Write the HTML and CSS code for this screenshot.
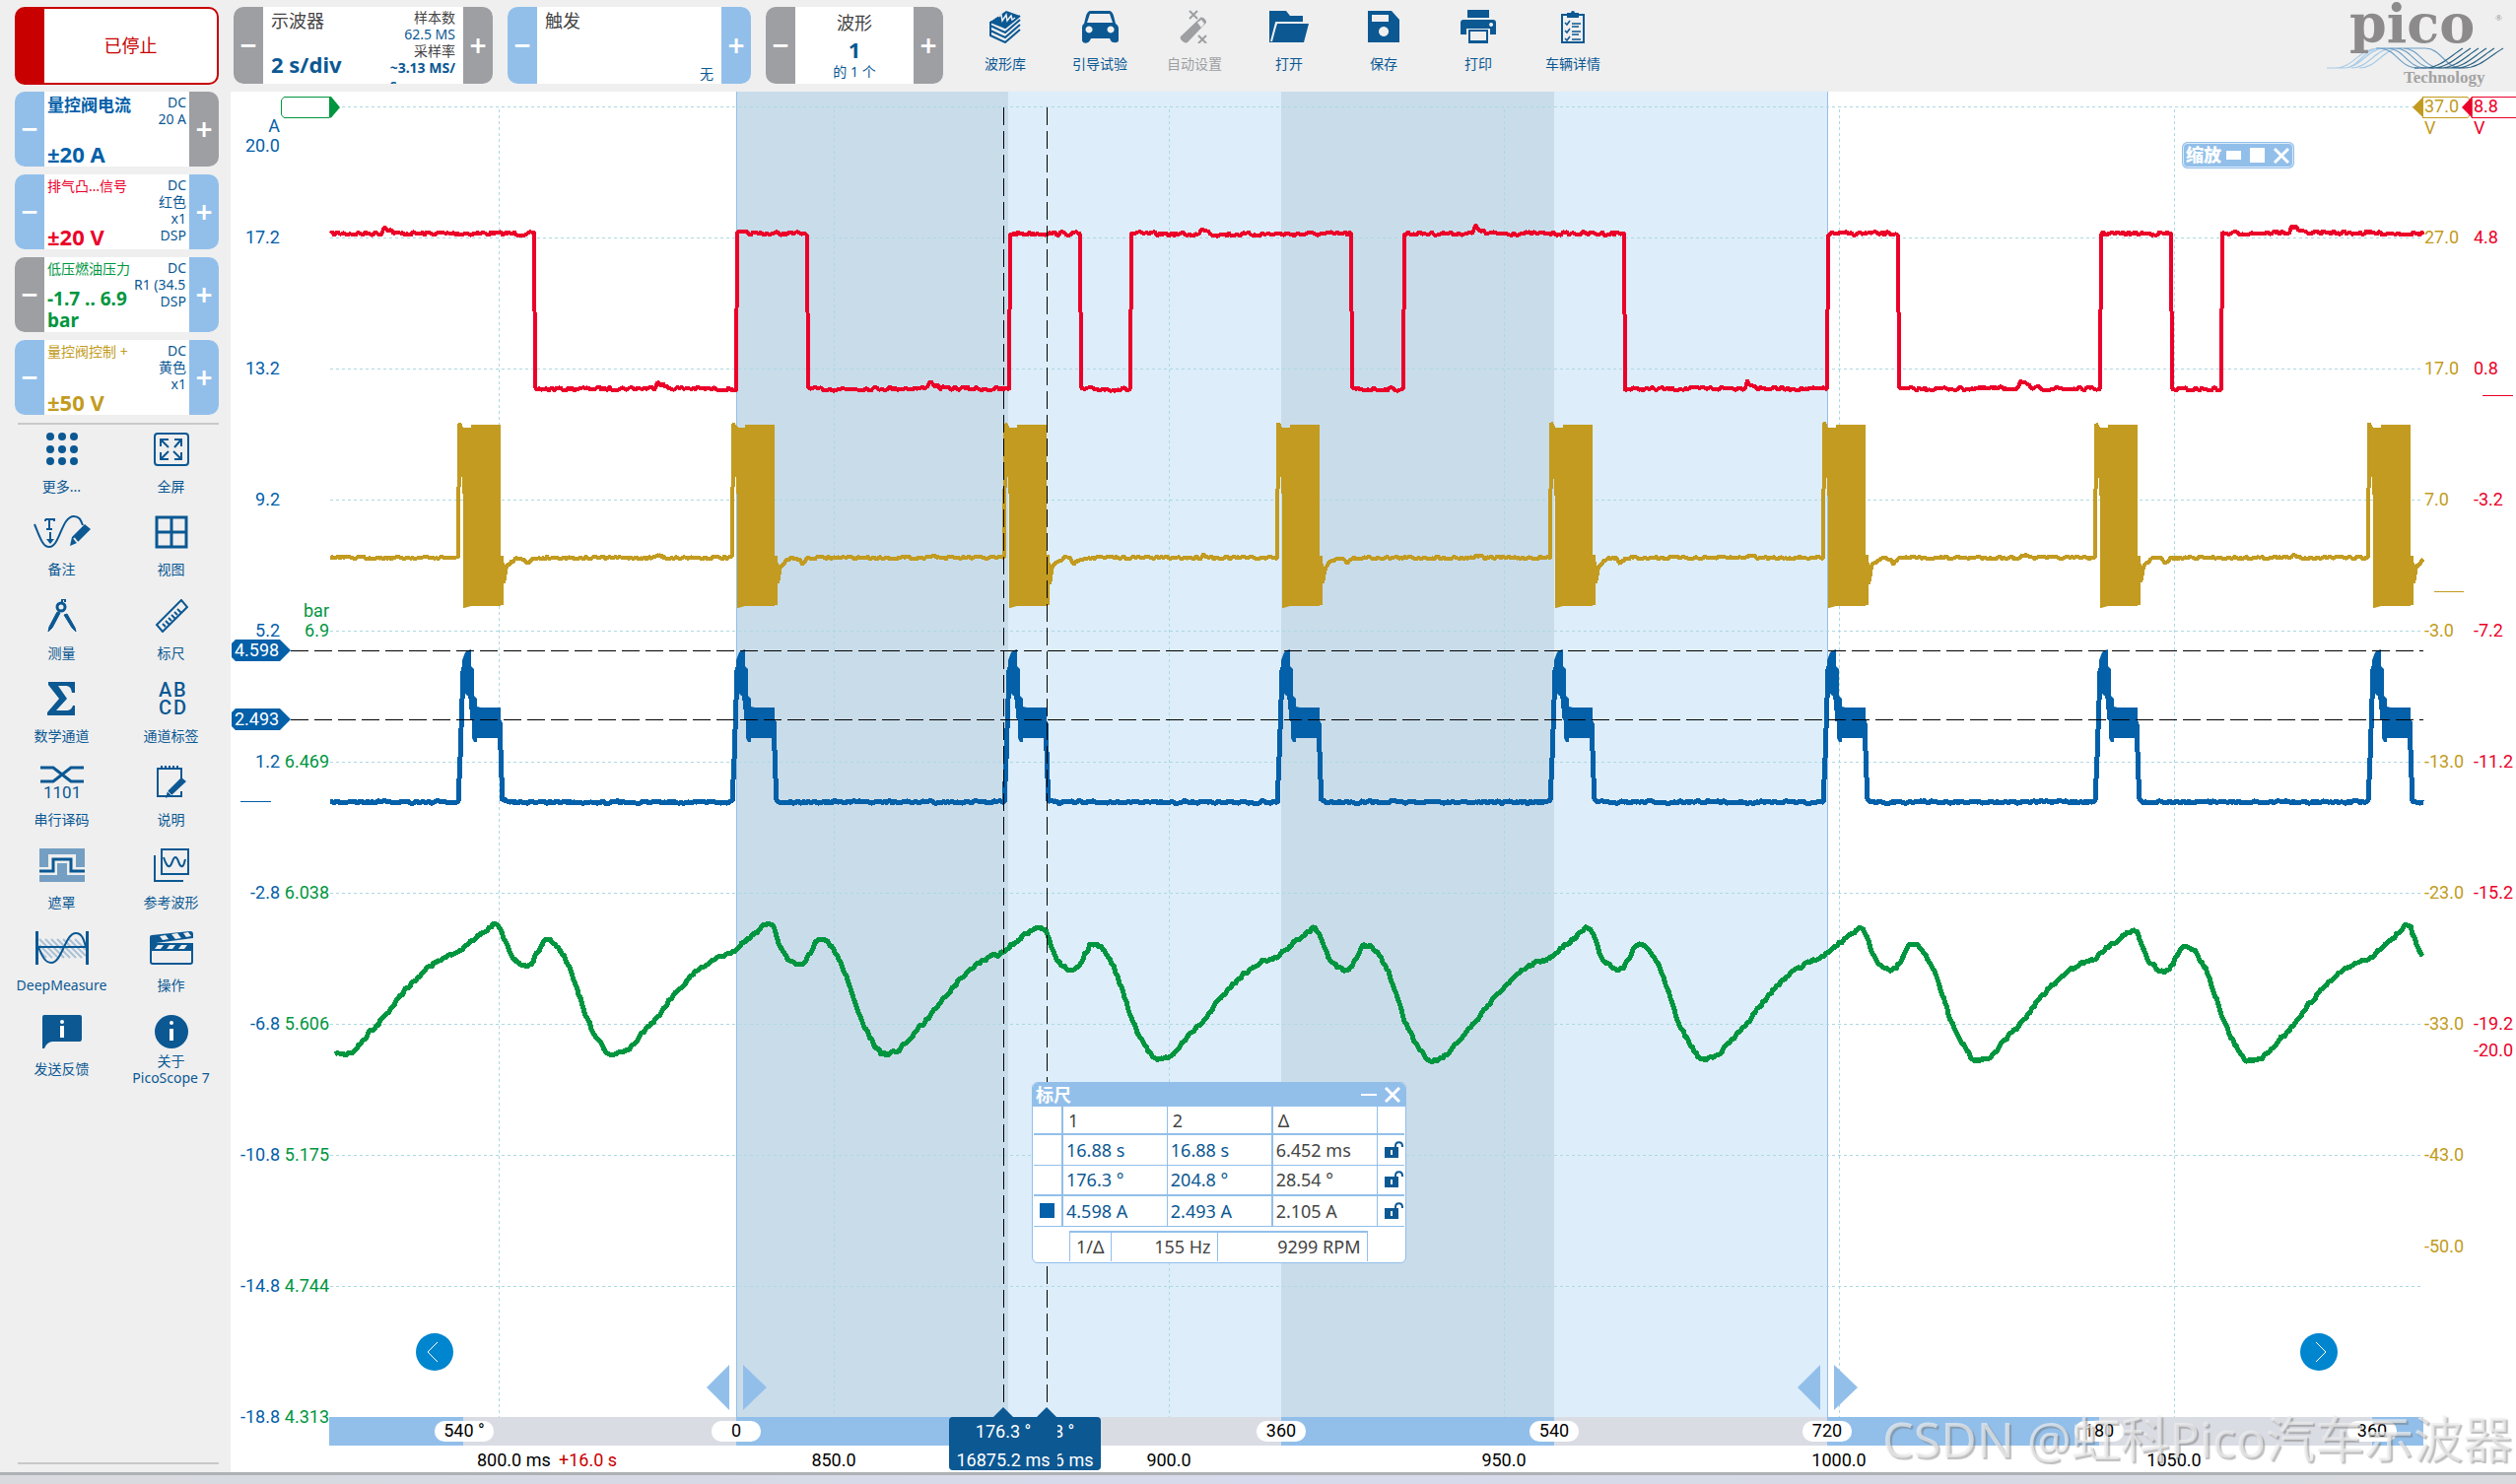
FILE: index.html
```html
<!DOCTYPE html>
<html lang="zh-CN">
<head>
<meta charset="utf-8">
<title>PicoScope 7</title>
<link rel="stylesheet" href="styles.css">
</head>
<body>
<header class="topbar">
  <button class="stop"><span>已停止</span></button>
  <section class="card timebase">
    <button class="step off" aria-label="减小时基">−</button>
    <div class="card-body">
      <div class="card-main"><span class="card-title">示波器</span><strong class="range">2 s/div</strong></div>
      <div class="card-info"><span class="dark">样本数</span><span>62.5 MS</span><span class="dark">采样率</span><b>~3.13 MS/<br>s</b></div>
    </div>
    <button class="step off" aria-label="增大时基">+</button>
  </section>
  <section class="card trigger">
    <button class="step" aria-label="上一触发">−</button>
    <div class="card-body">
      <div class="card-main"><span class="card-title">触发</span></div>
      <div class="card-info end"><span>无</span></div>
    </div>
    <button class="step" aria-label="下一触发">+</button>
  </section>
  <section class="card buffer">
    <button class="step off" aria-label="上一波形">−</button>
    <div class="card-body centered"><span class="card-title">波形</span><strong class="range">1</strong><span class="small">的 1 个</span></div>
    <button class="step off" aria-label="下一波形">+</button>
  </section>
  <nav class="tools">
    <button class="tool"><svg width="32" height="34" viewBox="0 0 32 34"><path d="M1 12 17 1l14 5-15 12z" fill="currentColor"/><path d="M1 12v4l15 7 15-13M1 17v4l15 7 15-13M1 22v4l15 7 15-13M31 6 16 18 1 12" fill="none" stroke="currentColor" stroke-width="2"/><path d="m9 7 3-2 1 6 4-6 1 6 4-5 1 4 3-2" fill="none" stroke="#efefef" stroke-width="1.5"/></svg><span>波形库</span></button>
    <button class="tool"><svg width="38" height="34" viewBox="0 0 38 34"><path fill="currentColor" fill-rule="evenodd" d="M10 1h18c3 0 4 2 5 5l2 8c2 1 3 3 3 5v12c0 3-7 3-8 0l-1-2H10l-1 2c-2 4-8 3-8 0V19c0-2 0-4 2-5l2-8c1-3 2-5 5-5zM9 4 6 13h26l-3-9zM8 16.500a3.500 3.500 0 1 0 .1 0zm22 0a3.500 3.500 0 1 0 .1 0z"/></svg><span>引导试验</span></button>
    <button class="tool" disabled><svg width="32" height="34" viewBox="0 0 32 34"><path d="m2 27 20-19c2-2 7 3 6 5L9 33c-2 2-9-3-7-6z" fill="currentColor"/><path d="m23 10-4 3 4 5 3-4z" fill="#efefef"/><path d="m11 1 8 8m0-8-8 8m9 17 8 8m0-8-8 8m-5-29h1m8 24h1" stroke="currentColor" stroke-width="2"/></svg><span>自动设置</span></button>
    <button class="tool"><svg width="42" height="34" viewBox="0 0 42 34"><path d="M1 1h17l4 5h13v6H9L3 30 9 14h32l-5 19H1z" fill="currentColor"/><path d="M3 32 8 13h27" fill="none" stroke="#efefef" stroke-width="2"/></svg><span>打开</span></button>
    <button class="tool"><svg width="34" height="34" viewBox="0 0 34 34"><path fill="currentColor" fill-rule="evenodd" d="M1 1h24l8 9v23H1zm4 4v7h17V5zm12 12a5 5 0 1 0 .1 0z"/></svg><span>保存</span></button>
    <button class="tool"><svg width="36" height="34" viewBox="0 0 36 34"><path fill="currentColor" fill-rule="evenodd" d="M7 0h22v8H7zM3 10h30q3 0 3 3v12h-6v-6H6v6H0V13q0-3 3-3zm28 3a2 2 0 1 0 .1 0zM8 20h20v14H8zm2 2v9h16v-9z"/></svg><span>打印</span></button>
    <button class="tool"><svg width="26" height="34" viewBox="0 0 26 34"><path d="M2 5h22v28H2z" fill="none" stroke="currentColor" stroke-width="2"/><path d="M7 3h4a2 2 0 0 1 4 0h4v5H7z" fill="currentColor"/><path d="m5 13 2 2 3-4m-5 10 2 2 3-4m-5 10 2 2 3-4m2-13h9m-9 3h7m-7 5h9m-9 3h7m-7 5h9m-9 3h7" fill="none" stroke="currentColor" stroke-width="1.500"/></svg><span>车辆详情</span></button>
  </nav>
  <svg class="logo" width="184" height="80" viewBox="2359 6 184 80" role="img" aria-label="pico Technology">
    <g fill="none" stroke-width="1.200">
      <g stroke="#a9cbe6"><path d="M2361 68h18c14 0 20-20 36-20M2370 68c18 0 24-20 44-20M2378 68c18 0 24-20 42-20M2386 68c18 0 24-20 42-20M2394 68c18 0 24-20 42-20"/></g>
      <g stroke="#6f9fc5"><path d="M2411 48h50c16 0 20 20 36 20M2414 48c18 0 20 20 40 20M2422 48c18 0 20 20 40 20M2430 48c18 0 20 20 40 20M2438 48c18 0 20 20 40 20"/></g>
      <g stroke="#2c6385"><path d="M2450 68h50c16 0 26-12 40-20M2460 68c16 0 26-12 39-20M2468 68c16 0 26-12 39-20M2476 68c16 0 26-12 39-20M2484 68c16 0 26-12 39-20M2492 68c16 0 26-12 39-20"/></g>
    </g>
    <text class="logo-name" x="2384" y="42">pico</text>
    <text class="logo-reg" x="2532" y="20">®</text>
    <text class="logo-sub" x="2439" y="83">Technology</text>
  </svg>
</header>
<main class="work">
  <aside class="side">
    <section class="card channel blue">
      <button class="step" aria-label="减小量程">−</button>
      <div class="card-body"><div class="card-main"><b class="ch-name big">量控阀电流</b><strong class="range">±20 A</strong></div><div class="card-info"><span>DC</span><span>20 A</span></div></div>
      <button class="step off" aria-label="增大量程">+</button>
    </section>
    <section class="card channel red">
      <button class="step" aria-label="减小量程">−</button>
      <div class="card-body"><div class="card-main"><span class="ch-name">排气凸…信号</span><strong class="range">±20 V</strong></div><div class="card-info"><span>DC</span><span>红色</span><span>x1</span><span>DSP</span></div></div>
      <button class="step" aria-label="增大量程">+</button>
    </section>
    <section class="card channel green">
      <button class="step off" aria-label="减小量程">−</button>
      <div class="card-body"><div class="card-main"><span class="ch-name">低压燃油压力</span><strong class="range">-1.7 .. 6.9 bar</strong></div><div class="card-info clip"><span>DC</span><span class="from-start">R1 (34.5</span><span>DSP</span></div></div>
      <button class="step" aria-label="增大量程">+</button>
    </section>
    <section class="card channel gold">
      <button class="step" aria-label="减小量程">−</button>
      <div class="card-body"><div class="card-main"><span class="ch-name">量控阀控制 +</span><strong class="range">±50 V</strong></div><div class="card-info"><span>DC</span><span>黄色</span><span>x1</span></div></div>
      <button class="step" aria-label="增大量程">+</button>
    </section>
    <hr>
    <nav class="menu">
      <button class="tool"><svg width="34" height="34" viewBox="0 0 34 34" fill="currentColor"><circle cx="5" cy="4" r="4"/><circle cx="17" cy="4" r="4"/><circle cx="29" cy="4" r="4"/><circle cx="5" cy="17" r="4"/><circle cx="17" cy="17" r="4"/><circle cx="29" cy="17" r="4"/><circle cx="5" cy="29" r="4"/><circle cx="17" cy="29" r="4"/><circle cx="29" cy="29" r="4"/></svg><span>更多...</span></button>
      <button class="tool"><svg width="36" height="34" viewBox="0 0 36 34" fill="none" stroke="currentColor" stroke-width="2"><rect x="1" y="1" width="34" height="32" rx="3"/><path d="M7 14V7h8M7 7l8 8M21 7h7v7m0-7-7 8M7 20v7h8m-8 0 8-8m6 8h7v-7m0 7-8-8"/></svg><span>全屏</span></button>
      <button class="tool"><svg width="58" height="34" viewBox="0 0 58 34" fill="none" stroke="currentColor" stroke-width="2"><path d="M1 9c5 12 8 23 15 23C27 32 28 1 41 1c5 0 7 3 9 9M17 17v10M12 4h9v2M12 6V4m4 0v10m-3 0h6"/><path d="m13 24 4 5 4-5z" fill="currentColor" stroke="none"/><path d="m37 31 2-9 13-13 6 5-14 14z" fill="currentColor" stroke="none"/><path d="m41 23 4 5" stroke="#efefef"/></svg><span>备注</span></button>
      <button class="tool"><svg width="34" height="34" viewBox="0 0 34 34" fill="none" stroke="currentColor" stroke-width="3"><path d="M2 2h30v30H2zM17 2v30M2 17h30"/></svg><span>视图</span></button>
      <button class="tool"><svg width="30" height="34" viewBox="0 0 30 34" fill="none" stroke="currentColor"><circle cx="14" cy="8" r="4" stroke-width="3"/><path d="M15 3V0h3v3" stroke-width="2"/><path d="M10 13 2 28l-1 5 4-4 8-15zM17 16l3-1 8 14 1 4-4-4z" fill="currentColor"/></svg><span>测量</span></button>
      <button class="tool"><svg width="34" height="34" viewBox="0 0 34 34" fill="none" stroke="currentColor" stroke-width="2"><path d="M27 1 2 26l6 7L33 8zM8 25l3 3m0-6 4 4m-1-7 3 3m0-6 4 4m-1-7 3 3m0-6 4 4"/></svg><span>标尺</span></button>
      <button class="tool"><svg width="30" height="34" viewBox="0 0 30 34"><path d="M1 0h27v11h-3c-1-5-2-7-7-7h-7l9 13L9 29h10c4 0 6-2 7-5h2v10H0v-3l12-14L1 3z" fill="currentColor"/></svg><span>数学通道</span></button>
      <button class="tool"><svg width="34" height="34" viewBox="0 0 34 34"><text class="glyph" x="4" y="15">A</text><text class="glyph" x="19" y="15">B</text><text class="glyph" x="4" y="33">C</text><text class="glyph" x="19" y="33">D</text></svg><span>通道标签</span></button>
      <button class="tool"><svg width="44" height="34" viewBox="0 0 44 34"><path d="M0 2h13l18 14h13M0 16h13L31 2h13" fill="none" stroke="currentColor" stroke-width="3"/><text class="glyph thin" x="3" y="33">1101</text></svg><span>串行译码</span></button>
      <button class="tool"><svg width="32" height="34" viewBox="0 0 32 34"><path d="M26 14V3H2v28h24v-5M6 0v4m4-4v4m4-4v4m4-4v4m4-4v4" fill="none" stroke="currentColor" stroke-width="2"/><path d="m10 33 2-7 14-14 5 4-15 14z" fill="currentColor"/><path d="m12 26 4 4" stroke="#efefef"/></svg><span>说明</span></button>
      <button class="tool"><svg width="46" height="34" viewBox="0 0 46 34"><path d="M0 0h46v19h-9V6H9v13H0zM0 27h18V15h10v12h18v7H0z" fill="#749fc3"/><path d="M0 23h14V11h18v12h14" fill="none" stroke="currentColor" stroke-width="3"/></svg><span>遮罩</span></button>
      <button class="tool"><svg width="36" height="34" viewBox="0 0 36 34" fill="none" stroke="currentColor" stroke-width="2"><path d="M8 1h27v25H8zM1 7v26h29" /><path d="M10 9c2 6 4 10 6 9 3-1 3-9 6-9s3 8 6 9c2 1 3-3 4-7"/></svg><span>参考波形</span></button>
      <button class="tool"><svg width="54" height="34" viewBox="0 0 54 34" fill="none" stroke="currentColor"><path d="m4 8 19 19M10 8l19 19M16 8l19 19M22 8l19 19M28 8l19 19M34 8l17 17M40 8l11 11M4 14l13 13M4 20l7 7" stroke="#a9c1d6" stroke-width="2"/><path d="M1.500 0v34M52.500 0v34" stroke-width="3"/><path d="M2 16h50M3 16c4 10 7 16 13 16C27 32 30 2 41 2c6 0 8 6 10 14" stroke-width="2"/></svg><span>DeepMeasure</span></button>
      <button class="tool"><svg width="46" height="34" viewBox="0 0 46 34"><path d="M2 19h42v12q0 2-2 2H4q-2 0-2-2z" fill="none" stroke="currentColor" stroke-width="2"/><path d="M1 6q0-2 2-2L42 0q3 0 3 3v4L7 12h38v8H1z" fill="currentColor"/><path d="m11 5 6-1 3 4-6 1zm12-2 6-1 4 5-6 1zm12-1 5-1 3 4-5 1zM9 14h6l-3 4H6zm12 0h6l-3 4h-6zm12 0h6l-3 4h-6z" fill="#efefef"/></svg><span>操作</span></button>
      <button class="tool"><svg width="40" height="34" viewBox="0 0 40 34"><path d="M2 0h36q2 0 2 2v22q0 3-2 3H10q-6 1-8 7H0V2q0-2 2-2z" fill="currentColor"/><path d="M20 11v12" stroke="#fff" stroke-width="4"/><circle cx="20" cy="7" r="2" fill="#fff"/></svg><span>发送反馈</span></button>
      <button class="tool tight"><svg width="34" height="34" viewBox="0 0 34 34"><circle cx="17" cy="17" r="17" fill="currentColor"/><path d="M17 14v12" stroke="#fff" stroke-width="4"/><circle cx="17" cy="8" r="2" fill="#fff"/></svg><span>关于<br>PicoScope 7</span></button>
    </nav>
    <hr class="last">
  </aside>
  <section class="plot">
    <svg id="scope" viewBox="234 93 2319 1401"></svg>
    <div class="zoom-box"><b>缩放</b><button class="z-min" aria-label="缩小"></button><button class="z-max" aria-label="放大"></button><button class="z-close" aria-label="关闭"><svg width="16" height="16" viewBox="0 0 16 16"><path d="m1 1 14 14M15 1 1 15" stroke="#fff" stroke-width="3"/></svg></button></div>
    <section class="rulers">
      <header><b>标尺</b><button aria-label="最小化"><svg width="16" height="16" viewBox="0 0 16 16"><path d="M0 8h16" stroke="#fff" stroke-width="2"/></svg></button><button aria-label="关闭"><svg width="16" height="16" viewBox="0 0 16 16"><path d="m1 1 14 14M15 1 1 15" stroke="#fff" stroke-width="3"/></svg></button></header>
      <table class="values">
        <colgroup><col class="c-mark"><col><col><col><col class="c-lock"></colgroup>
        <tr class="head"><td></td><th>1</th><th>2</th><th>Δ</th><td></td></tr>
        <tr><td></td><td>16.88 s</td><td>16.88 s</td><td class="delta">6.452 ms</td><td class="lock"><svg width="20" height="18" viewBox="0 0 20 18"><path d="M0 6h14v11H0z" fill="currentColor"/><path d="M11 7V5c0-5 7-5 7 0v1" fill="none" stroke="currentColor" stroke-width="2"/><path d="M7 9v5" stroke="#fff" stroke-width="2"/></svg></td></tr>
        <tr><td></td><td>176.3 °</td><td>204.8 °</td><td class="delta">28.54 °</td><td class="lock"><svg width="20" height="18" viewBox="0 0 20 18"><path d="M0 6h14v11H0z" fill="currentColor"/><path d="M11 7V5c0-5 7-5 7 0v1" fill="none" stroke="currentColor" stroke-width="2"/><path d="M7 9v5" stroke="#fff" stroke-width="2"/></svg></td></tr>
        <tr><td><i class="swatch"></i></td><td>4.598 A</td><td>2.493 A</td><td class="delta">2.105 A</td><td class="lock"><svg width="20" height="18" viewBox="0 0 20 18"><path d="M0 6h14v11H0z" fill="currentColor"/><path d="M11 7V5c0-5 7-5 7 0v1" fill="none" stroke="currentColor" stroke-width="2"/><path d="M7 9v5" stroke="#fff" stroke-width="2"/></svg></td></tr>
      </table>
      <table class="rate"><tr><th>1/Δ</th><td class="hz">155 Hz</td><td class="rpm">9299 RPM</td></tr></table>
    </section>
    <button class="go prev" aria-label="上一页"><svg width="38" height="38" viewBox="0 0 38 38"><path d="M22 9 12 19l10 10" fill="none" stroke="#fff"/></svg></button>
    <button class="go next" aria-label="下一页"><svg width="38" height="38" viewBox="0 0 38 38"><path d="m16 9 10 10-10 10" fill="none" stroke="#fff"/></svg></button>
    <p class="mark">CSDN @虹科Pico汽车示波器</p>
  </section>
</main>
<footer class="taskbar"></footer>
<script src="chart.js"></script>
</body>
</html>
```
FILE: styles.css
```css
* { box-sizing: border-box; }
body {
  margin: 0;
  min-height: 100vh;
  display: flex;
  flex-direction: column;
  background: #efefef;
  color: #0b5893;
  font: 14px/17px "Noto Sans", "Noto Sans CJK SC", sans-serif;
  overflow: hidden;
}
button { border: 0; padding: 0; margin: 0; background: none; color: inherit; font: inherit; }

.topbar { height: 93px; display: flex; align-items: flex-start; padding: 7px 10px 0 15px; gap: 15px; }
.stop {
  width: 207px; height: 79px; border: 2px solid #c80000; border-left-width: 30px; border-radius: 10px;
  background: #fff; color: #c80000; font-size: 18px;
}
.card { display: flex; border-radius: 10px; overflow: hidden; background: #fff; flex: none; }
.topbar .card { height: 78px; }
.timebase { width: 263px; }
.trigger { width: 247px; }
.buffer { width: 180px; }
.step { width: 30px; flex: none; background: #92bfea; color: #fff; font-size: 30px; font-weight: 600; line-height: 30px; }
.step.off { background: #9d9fa3; }
.card-body { flex: 1; min-width: 0; display: flex; justify-content: space-between; padding: 2px 8px 0 8px; }
.card-main { display: flex; flex-direction: column; justify-content: space-between; flex: none; width: 100px; padding-bottom: 8px; }
.card-title { font-size: 18px; line-height: 24px; color: #444; }
.range { font-size: 22px; line-height: 24px; white-space: nowrap; }
.card-info { display: flex; flex-direction: column; align-items: flex-end; text-align: right; white-space: nowrap; }
.card-info b { text-align: left; }
.card-info.end { justify-content: flex-end; padding-bottom: 2px; }
.dark { color: #444; }
.centered { flex-direction: column; align-items: center; justify-content: space-between; padding: 4px 0; }

.tools { display: flex; flex: 1; }
.tool { width: 96px; display: flex; flex-direction: column; align-items: center; gap: 12px; padding-top: 3px; }
.tool:disabled { color: #9d9fa3; }
.tool svg { display: block; flex: none; }
.glyph { font: 500 20px Roboto, sans-serif; fill: currentColor; }
.glyph.thin { font-weight: 400; font-size: 17px; }
.logo { flex: none; overflow: visible; }
.logo-name { font: bold 54px "DejaVu Serif", serif; fill: #8c8a8b; }
.logo-reg { font: 9px "Liberation Serif", serif; fill: #8c8a8b; }
.logo-sub { font: bold 17px "Liberation Serif", serif; fill: #a3a3a3; }

.work { display: flex; align-items: stretch; flex: 1; }
.side { width: 234px; flex: none; display: flex; flex-direction: column; gap: 8px; }
.channel { margin: 0 12px 0 15px; height: 76px; }
.channel .card-body { padding: 2px 3px 0; }
.channel .card-main { width: 88px; padding-bottom: 1px; }
.channel .card-info { flex: 1; min-width: 0; color: #0b5893; }
.channel .clip { overflow: hidden; }
.clip .from-start { align-self: flex-start; }
.ch-name { line-height: 20px; white-space: nowrap; }
.ch-name.big { font-size: 17px; line-height: 24px; }
.blue { color: #0360a9; }
.red { color: #eb0029; }
.green { color: #00963f; }
.gold { color: #c29b20; }
.green .range { white-space: normal; font-size: 19px; line-height: 22px; padding-bottom: 0; }
hr { margin: 0 12px 0 18px; border: 0; height: 2px; background: #c9c9c9; }
.menu { margin: -3px 0 0 7px; display: grid; grid-template-columns: 111px 111px; grid-auto-rows: 1fr; height: 675px; }
.menu .tool { width: 111px; justify-content: flex-start; }
.menu .tight { gap: 4px; }
.last { margin-top: auto; margin-bottom: 8px; }

.plot { flex: 1; min-width: 0; position: relative; background: #fff; }
#scope { display: block; width: 100%; height: auto; }
#scope text { font: 18px Roboto, sans-serif; }

.zoom-box {
  position: absolute; top: 51px; right: 225px; width: 114px; height: 27px; border-radius: 6px;
  display: flex; align-items: center; gap: 9px; padding-left: 4px; background: #92bfea;
  color: #fff; font-size: 18px; box-shadow: inset 0 0 0 1px #92bfea, inset 0 0 0 2px #dcebfa;
}
.zoom-box b { margin-right: -4px; font-weight: 800; }
.z-min { width: 15px; height: 9px; background: #fff; }
.z-max { width: 15px; height: 15px; background: #fff; }
.z-close svg { display: block; }

.rulers {
  position: absolute; left: 813px; top: 1005px; width: 380px; padding: 0 1px 1px; overflow: hidden;
  border: 1px solid #92bfea; border-radius: 6px; background: #fff; font-size: 18px; line-height: 24px;
}
.rulers header { height: 24px; margin: 0 -1px; padding: 0 5px 0 3px; display: flex; align-items: center; gap: 8px; background: #92bfea; color: #fff; }
.rulers header b { flex: 1; }
.rulers header svg { display: block; }
table { border-collapse: collapse; }
.values { width: 100%; table-layout: fixed; }
.values td, .values th { border: 1px solid #92bfea; padding: 0 0 0 3px; height: 31px; font-weight: 400; text-align: left; }
.values tr > :first-child { border-left: 0; border-right-width: 2px; }
.values tr > :last-child { border-right: 0; }
.values tr > :nth-child(3) { border-right-width: 2px; }
.values .head > * { height: 28px; border-top: 0; border-bottom-width: 2px; padding-left: 5px; }
.values tr:last-child td { border-top-width: 2px; }
.values .delta, .values th, .rate { color: #444; }
.c-mark { width: 29px; }
.c-lock { width: 28px; }
.values .lock { padding-left: 7px; }
.lock svg { display: block; }
.swatch { display: block; width: 15px; height: 15px; background: #0360a9; margin-left: 3px; }
.rate { margin: 4px 0 0 36px; }
.rate th, .rate td { height: 30px; padding: 0 6px; border: 1px solid #92bfea; border-width: 2px 1px 0; font-weight: 400; text-align: right; line-height: 22px; }
.rate .hz { width: 108px; }
.rate .rpm { width: 152px; }

.go { position: absolute; bottom: 103px; width: 38px; height: 38px; border-radius: 50%; background: #0085cf; }
.go svg { display: block; }
.prev { left: 188px; }
.next { right: 181px; }
.mark {
  position: absolute; right: 4px; bottom: -2px; margin: 0; font-size: 50px; line-height: 72px; white-space: nowrap;
  color: rgba(236, 236, 236, .7); text-shadow: 2px 2px 1px rgba(110, 110, 110, .45); pointer-events: none;
}
.taskbar { height: 12px; flex: none; border-top: 3px solid #aeb2b4; background: linear-gradient(90deg, #d8dade, #d6daec 50%, #d8dade); }
```
FILE: chart.js
```js
const scope = document.getElementById('scope');
const NS = 'http://www.w3.org/2000/svg';
const colors = { blue: '#0360a9', red: '#eb0029', green: '#00963f', gold: '#c29b20', sky: '#92bfea', navy: '#0b5893' };
const left = 335, right = 2459, bottom = 1438;

function add(name, attrs, text) {
  const el = document.createElementNS(NS, name);
  for (const key in attrs) el.setAttribute(key, attrs[key]);
  if (text !== undefined) el.textContent = text;
  scope.append(el);
}
function rect(x, y, x2, y2, fill, rx = 0) {
  add('rect', { x, y, width: x2 - x, height: y2 - y, fill, rx });
}
function label(text, x, y, fill, anchor = 'start') {
  add('text', { x, y: y + 6, fill, 'text-anchor': anchor }, text);
}
function dashed(d, stroke, dash) {
  add('path', { d, stroke, fill: 'none', 'stroke-dasharray': dash, 'shape-rendering': 'crispEdges' });
}

let seed = 7;
function random() {
  seed = (seed * 16807) % 2147483647;
  return seed / 2147483647 - 0.5;
}
function trace(points, stroke, width, noise) {
  let d = 'M' + points[0];
  for (let i = 1; i < points.length; i++) {
    const [x1, y1] = points[i - 1], [x2, y2] = points[i];
    const steps = Math.max(1, Math.round((x2 - x1) / 2));
    for (let k = 1; k <= steps; k++) {
      const x = x1 + (x2 - x1) * k / steps;
      const y = y1 + (y2 - y1) * k / steps + random() * noise;
      d += 'L' + x.toFixed(1) + ' ' + y.toFixed(1);
    }
  }
  add('path', { d, fill: 'none', stroke, 'stroke-width': width, 'stroke-linejoin': 'bevel', 'shape-rendering': 'crispEdges' });
}

// crank-angle bands
rect(747, 93, 1023, bottom, '#c9dcea');
rect(1023, 93, 1300, bottom, '#ddedfa');
rect(1300, 93, 1577, bottom, '#c9dcea');
rect(1577, 93, 1855, bottom, '#ddedfa');
dashed('M747.5 93V1438M1854.5 93V1438', colors.sky, 'none');

// graticule
for (let i = 0; i < 10; i++) dashed(`M${left} ${108.5 + 133 * i}H${right}`, '#acd9e2', '3 3');
for (let i = 0; i < 6; i++) dashed(`M${506.5 + 340 * i} 111V${bottom}`, '#acd9e2', '3 3');

// exhaust cam signal
const edges = [542, 747, 819, 1024, 1096, 1147, 1371, 1424, 1648, 1854, 1926, 2131, 2203, 2254];
const red = [[left, 237]];
let high = true;
for (const x of edges) {
  red.push([x, high ? 237 : 395]);
  high = !high;
  red.push([x + 1, high ? 237 : 395]);
}
red.push([right, 237]);
for (const [x, y] of [[390, 230], [667, 387], [943, 387], [1220, 231], [1497, 230], [1773, 387], [2050, 387], [2326, 229]]) {
  const i = red.findIndex(p => p[0] > x);
  red.splice(i, 0, [x - 3, y + 7], [x, y], [x + 8, y + 5], [x + 11, y + 7]);
}
trace(red, colors.red, 4, 4);

// valve control and valve current pulses
const gold = [[left, 566]], blue = [[left, 814]];
let goldFill = '', blueFill = '';
for (const s of [466, 744, 1020, 1297, 1574, 1851, 2127, 2404]) {
  gold.push([s - 1, 566], [s, 430], [s + 3, 436], [s + 5, 500], [s + 41, 600], [s + 43, 564], [s + 45, 592], [s + 48, 575], [s + 53, 570]);
  goldFill += `M${s + 4} 434h8v-3h30v31V564h3v50h-3v1H${s + 12}l-7 2h-1z`;
  blue.push([s - 1, 814], [s + 1, 770], [s + 4, 680], [s + 8, 670], [s + 14, 730], [s + 41, 733], [s + 43, 790], [s + 44, 812], [s + 50, 814]);
  blueFill += `M${s + 3} 700v-30l3-8 3-2 3-1v17l3 3v27l3 3v8l4 1h20v31h-24v4h-3l-2-4v-24l-2-19h-3z`;
  if (s < 2400) {
    gold.push([s + 60, 566], [s + 66, 567], [s + 70, 572], [s + 75, 567], [s + 85, 566], [s + 198, 566], [s + 201, 563], [s + 210, 566]);
  }
}
gold.push([right, 567]);
blue.push([right, 814]);
trace(gold, colors.gold, 4, 3);
add('path', { d: goldFill, fill: colors.gold });
trace(blue, colors.blue, 5, 3);
add('path', { d: blueFill, fill: colors.blue });

// low-pressure fuel
const cycle = [[0, 937], [5, 940], [11, 957], [17, 970], [24, 977], [30, 980], [37, 978], [43, 968], [50, 955], [57, 954], [63, 959], [74, 977], [80, 993], [87, 1014], [92, 1030], [100, 1047], [109, 1062], [115, 1070], [121, 1071], [131, 1068], [139, 1061], [149, 1049], [165, 1032], [179, 1013], [195, 995], [209, 982], [225, 972], [239, 968], [247, 960], [262, 949]];
const drift = [0, 0, -1, 4, 5, 4, 5, 6, 1];
const green = [];
for (let n = -1; n < 8; n++) {
  for (const [x, y] of cycle) {
    const px = 502 + 277 * n + x;
    if (px >= left && px <= right) green.push([px, y + drift[n + 1]]);
  }
}
trace(green, colors.green, 5, 4);

// rulers
dashed('M295 660.5H2459M295 730.5H2459', '#000', '18 6');
dashed('M1018.5 109V1430M1062.5 109V1430', '#000', '18 6');
for (const [y, value] of [[660, '4.598'], [730, '2.493']]) {
  add('path', { d: `M239 ${y - 11}h45l11 11-11 11h-45l-4-4v-14z`, fill: colors.blue });
  label(value, 238, y, '#fff');
}

// vertical axes
label('A', 284, 128, colors.blue, 'end');
label('20.0', 284, 148, colors.blue, 'end');
label('bar', 334, 620, colors.green, 'end');
['17.2', '13.2', '9.2', '5.2', '1.2', '-2.8', '-6.8', '-10.8', '-14.8', '-18.8'].forEach((t, i) => label(t, 284, 241 + 133 * i, colors.blue, 'end'));
['6.9', '6.469', '6.038', '5.606', '5.175', '4.744', '4.313'].forEach((t, i) => label(t, 334, 640 + 133 * i, colors.green, 'end'));
['37.0', '27.0', '17.0', '7.0', '-3.0', '-13.0', '-23.0', '-33.0', '-43.0'].forEach((t, i) => label(t, 2460, 108 + 133 * i, colors.gold));
['8.8', '4.8', '0.8', '-3.2', '-7.2', '-11.2', '-15.2', '-19.2'].forEach((t, i) => label(t, 2510, 108 + 133 * i, colors.red));
label('V', 2460, 130, colors.gold);
label('V', 2510, 130, colors.red);
label('-50.0', 2460, 1265, colors.gold);
label('-20.0', 2510, 1066, colors.red);
dashed('M244 813.5H275', colors.blue, 'none');
dashed('M2470 600.5H2500', colors.gold, 'none');
dashed('M2519 401.5H2550', colors.red, 'none');

// channel markers
add('path', { d: 'M334 98.500H288l-2.500 3v15l2.500 3H334', fill: '#fff', stroke: colors.green });
add('path', { d: 'M334 98h2l9 11-9 10.500h-2z', fill: colors.green });
add('path', { d: 'M2458 98.500h46l2 3v15l-2 3h-46', fill: 'none', stroke: colors.gold });
add('path', { d: 'M2459 98v21.500l-11-10.500z', fill: colors.gold });
add('path', { d: 'M2560 98.500H2508v21H2560', fill: 'none', stroke: colors.red });
add('path', { d: 'M2508.500 98v21.500l-10.500-10.500z', fill: colors.red });

// cycle handles
for (const x of [747, 1854]) {
  add('path', { d: `M${x - 7} 1385v46l-23-23zM${x + 7} 1385v46l24-23z`, fill: colors.sky });
}

// crank-angle axis
rect(left - 1, 1438, right, 1467, '#dadce4');
for (const [a, b] of [[334, 470], [747, 1023], [1300, 1577], [1854, 2130], [2407, 2459]]) rect(a, 1438, b, 1467, colors.sky);
for (const [x, t, w] of [[471, '540 °', 30], [747, '0', 25], [1300, '360', 25], [1577, '540', 25], [1854, '720', 25], [2130, '180', 25], [2407, '360', 25]]) {
  rect(x - w, 1442, x + w, 1463, '#fff', 10);
  label(t, x, 1452, '#000', 'middle');
}

// time axis
label('800.0 ms', 484, 1482, '#000');
label('+16.0 s', 567, 1482, '#c80000');
['850.0', '900.0', '950.0', '1000.0', '1050.0'].forEach((t, i) => label(t, 846 + 340 * i, 1482, '#000', 'middle'));

// ruler flags, the first one lies over the second
for (const [x, angle, time] of [[1062, '204.8 °', '16881.6 ms'], [1018, '176.3 °', '16875.2 ms']]) {
  add('path', { d: `M${x - 10} 1438l10-10 10 10z`, fill: colors.navy });
  rect(x - 55, 1438, x + 55, 1492, colors.navy, 4);
  label(angle, x, 1453, '#fff', 'middle');
  label(time, x, 1482, '#fff', 'middle');
}
```
